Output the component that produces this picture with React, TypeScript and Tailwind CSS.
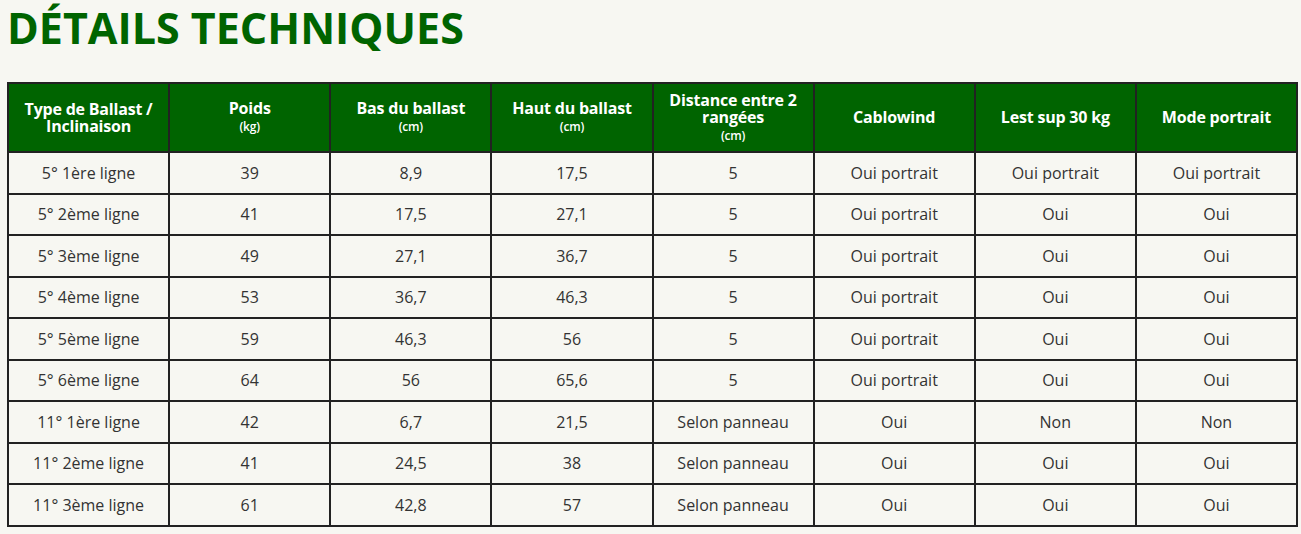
const headers: { title: string; unit?: string }[] = [
  { title: "Type de Ballast / Inclinaison" },
  { title: "Poids", unit: "(kg)" },
  { title: "Bas du ballast", unit: "(cm)" },
  { title: "Haut du ballast", unit: "(cm)" },
  { title: "Distance entre 2 rangées", unit: "(cm)" },
  { title: "Cablowind" },
  { title: "Lest sup 30 kg" },
  { title: "Mode portrait" },
];

const rows: string[][] = [
  ["5° 1ère ligne", "39", "8,9", "17,5", "5", "Oui portrait", "Oui portrait", "Oui portrait"],
  ["5° 2ème ligne", "41", "17,5", "27,1", "5", "Oui portrait", "Oui", "Oui"],
  ["5° 3ème ligne", "49", "27,1", "36,7", "5", "Oui portrait", "Oui", "Oui"],
  ["5° 4ème ligne", "53", "36,7", "46,3", "5", "Oui portrait", "Oui", "Oui"],
  ["5° 5ème ligne", "59", "46,3", "56", "5", "Oui portrait", "Oui", "Oui"],
  ["5° 6ème ligne", "64", "56", "65,6", "5", "Oui portrait", "Oui", "Oui"],
  ["11° 1ère ligne", "42", "6,7", "21,5", "Selon panneau", "Oui", "Non", "Non"],
  ["11° 2ème ligne", "41", "24,5", "38", "Selon panneau", "Oui", "Oui", "Oui"],
  ["11° 3ème ligne", "61", "42,8", "57", "Selon panneau", "Oui", "Oui", "Oui"],
];

export default function App() {
  return (
    <div className="min-h-[534px] w-[1301px] bg-[#f7f7f2] font-['Open_Sans',sans-serif]">
      <h1 className="pl-[7px] text-[43px] font-bold leading-[56px] text-[#006400]">
        DÉTAILS TECHNIQUES
      </h1>

      <div className="pl-[7px] pt-[26px]">
        <table className="w-[1291px] table-fixed border-collapse border-2 border-[#222]">
          <thead>
            <tr className="h-[69px] bg-[#006400]">
              {headers.map((h, i) => (
                <th
                  key={i}
                  className="border-2 border-[#222] px-2 text-center align-middle text-[16px] font-bold leading-[17px] tracking-[-0.2px] text-white"
                >
                  {i === 0 ? (
                    <>
                      Type de Ballast /<br />Inclinaison
                    </>
                  ) : (
                    h.title
                  )}
                  {h.unit && <div className="pt-[1px] text-[12px] font-semibold leading-[17px]">{h.unit}</div>}
                </th>
              ))}
            </tr>
          </thead>
          <tbody>
            {rows.map((r, ri) => (
              <tr key={ri} className="h-[41.5px]">
                {r.map((c, ci) => (
                  <td
                    key={ci}
                    className="border-2 border-[#222] text-center align-middle text-[16px] text-[#333]"
                  >
                    {c}
                  </td>
                ))}
              </tr>
            ))}
          </tbody>
        </table>
      </div>
    </div>
  );
}
